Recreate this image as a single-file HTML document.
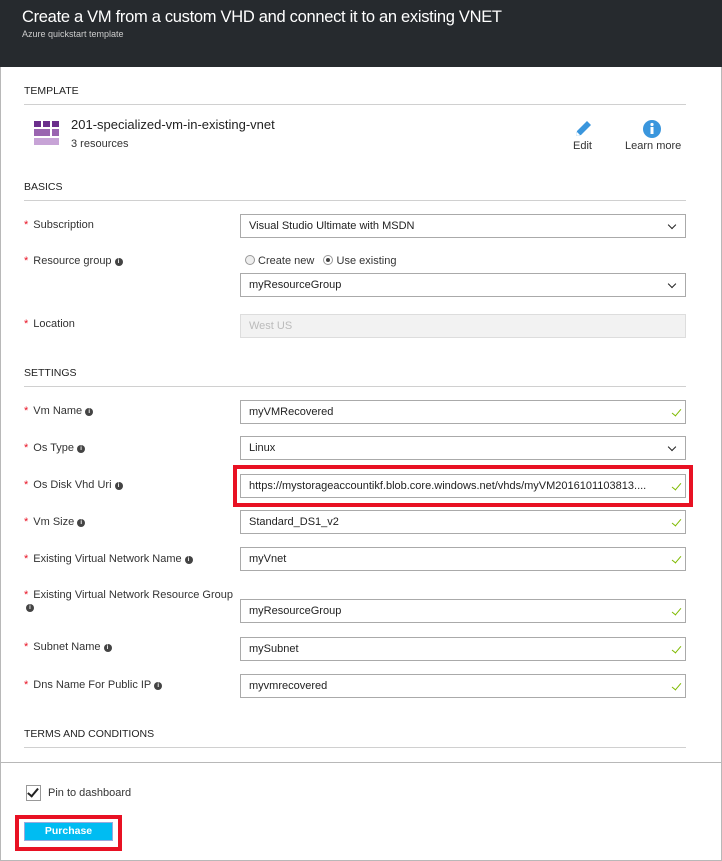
<!DOCTYPE html>
<html><head><style>
*{margin:0;padding:0;box-sizing:border-box}
body{width:722px;height:861px;background:#fff;font-family:"Liberation Sans",sans-serif;font-size:11px;color:#333;position:relative;overflow:hidden}
.a{position:absolute}
.hdr{left:0;top:0;width:722px;height:67px;background:#262a2e}
.frame{left:0;top:67px;width:722px;height:794px;border:1px solid #b8b8b8;border-top:none}
.sec{left:24px;font-size:10.5px;color:#222}
.line{left:24px;width:662px;height:1px;background:#d0d0d0}
.lbl{left:24px;font-size:11px;color:#333}
.lbl b{color:#e81123;font-weight:normal;margin-right:5px}
.i{display:inline-block;width:8px;height:8px;border-radius:50%;background:#444;color:#fff;font-size:6px;line-height:8px;text-align:center;font-weight:bold;vertical-align:1px;margin-left:3px}
.f{left:240px;width:446px;height:24px;border:1px solid #aaa;padding-left:8px;line-height:22px;font-size:11px;color:#222;white-space:nowrap;overflow:hidden}
.chk::after{content:"";position:absolute;right:6px;top:6px;width:4px;height:8px;border:solid #7fba00;border-width:0 1.5px 1.5px 0;transform:rotate(40deg)}
.dd::after{content:"";position:absolute;right:10px;top:7px;width:5px;height:5px;border:solid #222;border-width:0 1.5px 1.5px 0;transform:rotate(45deg)}
.red{border:4px solid #e81123}
</style></head><body>
<div class="a hdr"></div>
<div class="a" style="left:22px;top:8px;font-size:16.5px;letter-spacing:-0.3px;color:#fff">Create a VM from a custom VHD and connect it to an existing VNET</div>
<div class="a" style="left:22px;top:29px;font-size:9px;color:#ccc">Azure quickstart template</div>
<div class="a frame"></div>

<div class="a sec" style="top:85px">TEMPLATE</div>
<div class="a line" style="top:104px"></div>
<svg class="a" style="left:33px;top:120px" width="30" height="28"><g fill="#6b2e8c"><rect x="1" y="1" width="7" height="6"/><rect x="10" y="1" width="7" height="6"/><rect x="19" y="1" width="7" height="6"/></g><g fill="#9a64b0"><rect x="1" y="9" width="16" height="7"/><rect x="19" y="9" width="7" height="7"/></g><rect x="1" y="18" width="25" height="7" fill="#c7a3d6"/></svg>
<div class="a" style="left:71px;top:117px;font-size:13px;color:#222">201-specialized-vm-in-existing-vnet</div>
<div class="a" style="left:71px;top:138px;font-size:11px;color:#333">3 resources</div>
<svg class="a" style="left:573px;top:119px" width="20" height="20"><path d="M3 17 L4 12 L14 2 L18 6 L8 16 Z" fill="#3a96dd"/><path d="M3 17 L4 13 L7 16Z" fill="#fff"/></svg>
<div class="a" style="left:573px;top:140px;font-size:11px">Edit</div>
<svg class="a" style="left:642px;top:119px" width="20" height="20"><circle cx="10" cy="10" r="9" fill="#3a96dd"/><rect x="8.5" y="8" width="3" height="7" fill="#fff"/><circle cx="10" cy="5.5" r="1.6" fill="#fff"/></svg>
<div class="a" style="left:625px;top:140px;font-size:11px">Learn more</div>

<div class="a sec" style="top:181px">BASICS</div>
<div class="a line" style="top:200px"></div>
<div class="a lbl" style="top:219px"><b>*</b>Subscription</div>
<div class="a f dd" style="top:214px">Visual Studio Ultimate with MSDN</div>
<div class="a lbl" style="top:255px"><b>*</b>Resource group<span class="i">i</span></div>
<div class="a" style="left:245px;top:255px;font-size:11px"><span style="display:inline-block;width:10px;height:10px;border:1px solid #999;border-radius:50%;background:#eee;vertical-align:-1px"></span> Create new &nbsp; <span style="display:inline-block;width:10px;height:10px;border:1px solid #999;border-radius:50%;vertical-align:-1px;position:relative"><span style="position:absolute;left:2px;top:2px;width:4px;height:4px;border-radius:50%;background:#444"></span></span> Use existing</div>
<div class="a f dd" style="top:273px">myResourceGroup</div>
<div class="a lbl" style="top:318px"><b>*</b>Location</div>
<div class="a f" style="top:314px;background:#f2f2f2;border-color:#ddd;color:#bbb">West US</div>

<div class="a sec" style="top:367px">SETTINGS</div>
<div class="a line" style="top:386px"></div>
<div class="a lbl" style="top:405px"><b>*</b>Vm Name<span class="i">i</span></div>
<div class="a f chk" style="top:400px">myVMRecovered</div>
<div class="a lbl" style="top:442px"><b>*</b>Os Type<span class="i">i</span></div>
<div class="a f dd" style="top:436px">Linux</div>
<div class="a lbl" style="top:479px"><b>*</b>Os Disk Vhd Uri<span class="i">i</span></div>
<div class="a red" style="left:233px;top:465px;width:460px;height:42px"></div>
<div class="a f chk" style="top:474px">https://mystorageaccountikf.blob.core.windows.net/vhds/myVM2016101103813....</div>
<div class="a lbl" style="top:516px"><b>*</b>Vm Size<span class="i">i</span></div>
<div class="a f chk" style="top:510px">Standard_DS1_v2</div>
<div class="a lbl" style="top:553px"><b>*</b>Existing Virtual Network Name<span class="i">i</span></div>
<div class="a f chk" style="top:547px">myVnet</div>
<div class="a lbl" style="top:589px"><b>*</b>Existing Virtual Network Resource Group<br><span class="i" style="margin-left:2px">i</span></div>
<div class="a f chk" style="top:599px">myResourceGroup</div>
<div class="a lbl" style="top:641px"><b>*</b>Subnet Name<span class="i">i</span></div>
<div class="a f chk" style="top:637px">mySubnet</div>
<div class="a lbl" style="top:679px"><b>*</b>Dns Name For Public IP<span class="i">i</span></div>
<div class="a f chk" style="top:674px">myvmrecovered</div>

<div class="a sec" style="top:728px">TERMS AND CONDITIONS</div>
<div class="a line" style="top:747px"></div>
<div class="a" style="left:0;top:762px;width:722px;height:1px;background:#b8b8b8"></div>
<div class="a" style="left:26px;top:785px;width:15px;height:16px;border:1px solid #999"></div>
<div class="a" style="left:30px;top:786px;width:6px;height:11px;border:solid #222;border-width:0 2px 2px 0;transform:rotate(40deg)"></div>
<div class="a" style="left:48px;top:787px;font-size:11px">Pin to dashboard</div>
<div class="a red" style="left:15px;top:815px;width:107px;height:36px"></div>
<div class="a" style="left:24px;top:822px;width:89px;height:19px;background:#00bcf2;border:1px solid #9ad;color:#fff;font-weight:bold;font-size:10.5px;text-align:center;line-height:17px">Purchase</div>
</body></html>
